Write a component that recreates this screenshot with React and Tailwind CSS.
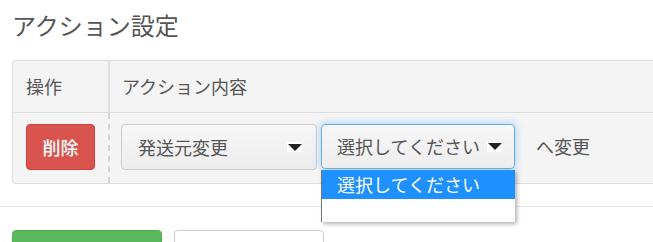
import React from "react";

function Arrow() {
  return (
    <span className="flex h-[10px] w-[15px] shrink-0 items-center justify-center bg-white">
      <svg width="14" height="7" viewBox="0 0 14 7">
        <polygon points="0,0 14,0 7,7" fill="#222" />
      </svg>
    </span>
  );
}

export default function App() {
  const font = { fontFamily: '"Noto Sans CJK JP", "Noto Sans", sans-serif' };
  return (
    <div className="h-[242px] w-[653px] overflow-hidden bg-white text-[#555]" style={font}>
      <div className="pl-3 pt-[7px]">
        <h3 className="text-[24px] leading-[36px] text-[#555]">アクション設定</h3>
        <div className="mt-[17px] w-[680px] rounded-[4px] border border-[#ddd] bg-[#f4f4f4]">
          <div className="flex h-[52px] border-b border-[#ddd]">
            <div className="flex w-[95px] items-center pl-[13px] text-[18px]">操作</div>
            <div className="flex flex-1 items-center border-l-2 border-[#e0e0e0] pl-3 text-[18px]">
              アクション内容
            </div>
          </div>
          <div className="flex h-[70px]">
            <div className="w-[95px] pl-[13px] pt-[11px]">
              <button className="flex h-[46px] w-[69px] items-center justify-center rounded-[4px] border border-[#d43f3a] bg-[#d9534f] text-[18px] font-medium text-white">
                削除
              </button>
            </div>
            <div className="flex flex-1 items-start border-l-2 border-dashed border-[#d4d4d4] pl-[11px] pt-[11px]">
              <div className="flex h-[46px] w-[196px] items-center justify-between rounded-[4px] border border-[#ccc] bg-gradient-to-b from-[#f7f7f7] to-[#ededed] pl-4 pr-[14px] text-[18px] text-[#555]">
                <span>発送元変更</span>
                <Arrow />
              </div>
              <div className="relative ml-[4px]">
                <div className="flex h-[45px] w-[194px] items-center justify-between rounded-[4px] border border-[#66afe9] bg-gradient-to-b from-[#f7f7f7] to-[#ededed] pl-[15px] pr-[12px] text-[18px] text-[#555] shadow-[0_0_8px_rgba(102,175,233,0.6)]">
                  <span>選択してください</span>
                  <Arrow />
                </div>
                <div className="absolute left-0 top-[46px] z-10 w-[194px] border-l border-[#777] bg-white shadow-[2px_2px_4px_rgba(0,0,0,0.3)]">
                  <div className="flex h-[29px] items-center bg-[#1e90ff] pl-[15px] text-[18px] text-white">
                    選択してください
                  </div>
                  <div className="h-[23px]" />
                </div>
              </div>
              <div className="ml-[21px] flex h-[45px] items-center text-[18px] text-[#555]">へ変更</div>
            </div>
          </div>
        </div>
      </div>
      <div className="mt-[22px] border-t border-[#e5e5e5]" />
      <div className="flex gap-3 pl-3 pt-[23px]">
        <div className="h-[46px] w-[150px] rounded-[4px] border border-[#4cae4c] bg-[#5cb85c]" />
        <div className="h-[46px] w-[150px] rounded-[4px] border border-[#ccc] bg-white" />
      </div>
    </div>
  );
}
